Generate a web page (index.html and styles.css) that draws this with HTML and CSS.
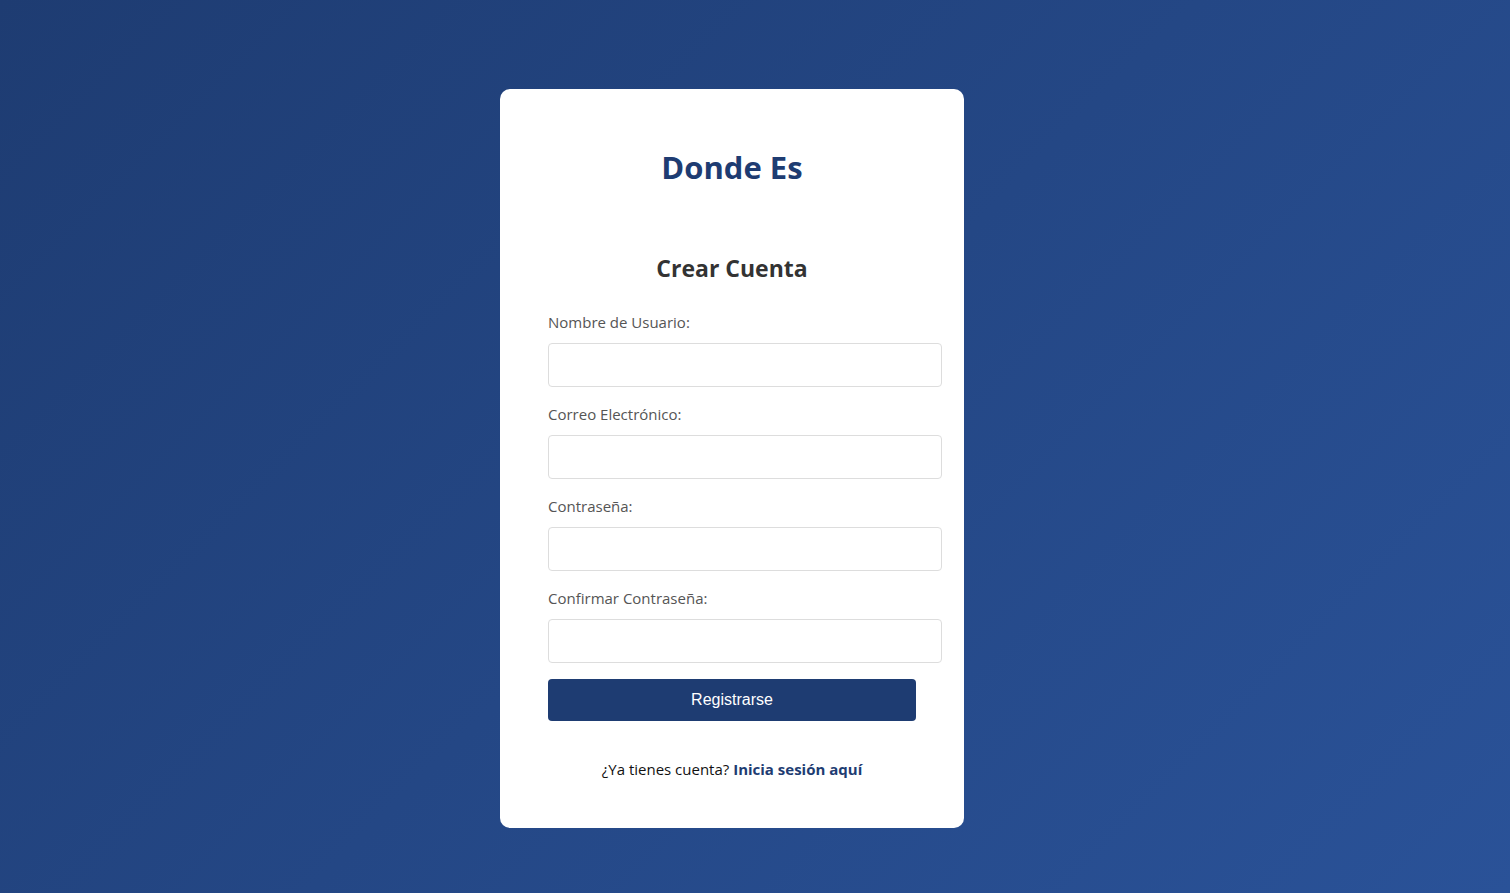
FILE: index.html
```html
<!DOCTYPE html>
<html lang="es">
<head>
<meta charset="utf-8">
<title>Donde Es - Crear Cuenta</title>
<link rel="stylesheet" href="styles.css">
</head>
<body>
<main class="page">
  <section class="card">
    <h1 class="brand">Donde Es</h1>
    <h2 class="title">Crear Cuenta</h2>
    <form class="form">
      <div class="group">
        <label class="label" for="u">Nombre de Usuario:</label>
        <input class="input" id="u" type="text">
      </div>
      <div class="group">
        <label class="label" for="e">Correo Electrónico:</label>
        <input class="input" id="e" type="email">
      </div>
      <div class="group">
        <label class="label" for="p">Contraseña:</label>
        <input class="input" id="p" type="password">
      </div>
      <div class="group">
        <label class="label" for="c">Confirmar Contraseña:</label>
        <input class="input" id="c" type="password">
      </div>
      <button class="btn" type="button">Registrarse</button>
    </form>
    <p class="foot">¿Ya tienes cuenta? <a class="link" href="#">Inicia sesión aquí</a></p>
  </section>
</main>
</body>
</html>
```
FILE: styles.css
```css
* { box-sizing: content-box; }
html, body { margin: 0; height: 100%; }
body {
  background: linear-gradient(135deg, #1e3c72 0%, #2a5298 100%);
  font-family: "Open Sans", "Noto Sans", sans-serif;
  color: #333;
}
.page {
  display: flex;
  justify-content: center;
  padding: 89px 46px 0 0;
}
.card {
  width: 368px;
  padding: 48px;
  background: #fff;
  border-radius: 10px;
}
.brand {
  margin: 11px 0 0;
  font-size: 31px;
  line-height: 38px;
  font-weight: 700;
  color: #1e3c72;
  text-align: center;
}
.title {
  margin: 68px 0 0;
  font-size: 23px;
  line-height: 28px;
  font-weight: 700;
  color: #333;
  text-align: center;
}
.form { margin-top: 29px; }
.group { margin-bottom: 16px; }
.label {
  display: block;
  font-size: 15px;
  line-height: 22px;
  margin-bottom: 10px;
  color: #555;
}
.input {
  display: block;
  width: 100%;
  height: 18px;
  padding: 12px;
  border: 1px solid #ddd;
  border-radius: 4px;
  font-size: 16px;
  margin: 0;
}
.btn {
  display: block;
  width: 100%;
  height: 42px;
  margin: 0;
  border: none;
  border-radius: 4px;
  background: #1e3c72;
  color: #fff;
  font-family: "Liberation Sans", Arial, sans-serif;
  font-size: 16px;
  box-sizing: border-box;
}
.foot {
  margin: 37px 0 0;
  font-size: 15px;
  line-height: 22px;
  text-align: center;
  color: #111;
}
.link {
  color: #1e3c72;
  font-weight: 700;
  text-decoration: none;
}
```
